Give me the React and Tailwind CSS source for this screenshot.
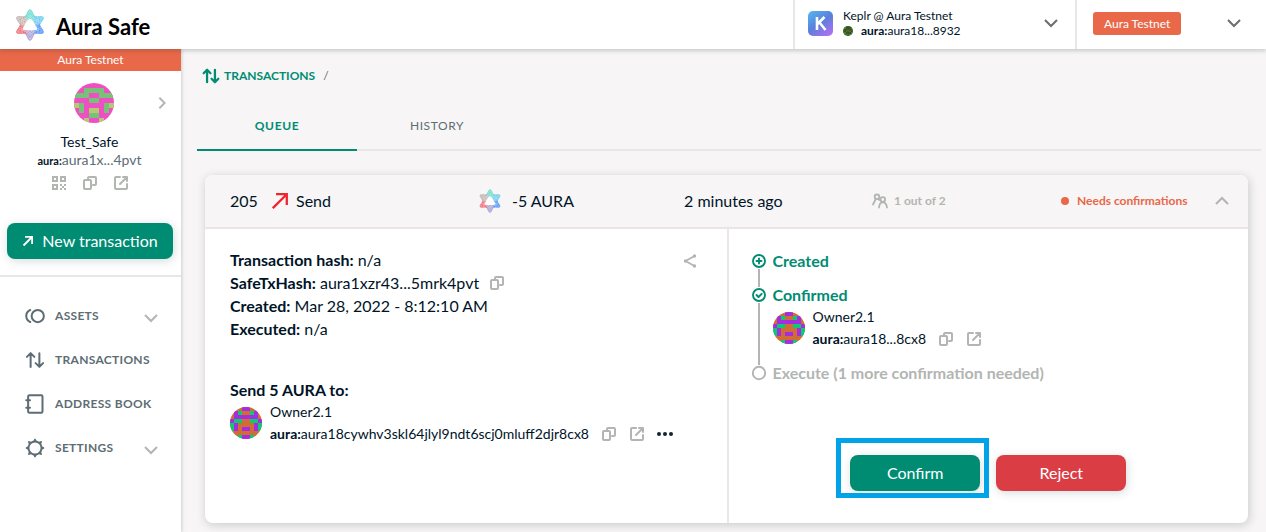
import React from "react";

function AuraLogo({ className }) {
  const tips = [
    ["#22c9b8", "#86e3d6"],
    ["#2db4e6", "#86d5f1"],
    ["#1f72f0", "#6ba6f9"],
    ["#7f6fba", "#bcb2de"],
    ["#ea2f3e", "#ef8a92"],
    ["#a18f8c", "#cfc2be"],
  ];
  return (
    <svg viewBox="0 0 32 32" className={className} aria-hidden="true">
      {tips.map(([dark, light], i) => (
        <g key={dark} transform={`rotate(${i * 60} 16 16)`}>
          <path d="M16 16L10.800 7.800C13 6.500 13.800.600 16 .600s3 5.900 5.200 7.200z" fill={light} fillOpacity=".85" />
          <path d="M10.800 7.800C13 6.500 13.800.600 16 .600s3 5.900 5.200 7.200" fill="none" stroke={dark} strokeWidth=".6" strokeOpacity=".7" />
          <path d="M11.500 8.500l6.500-5M13 9.500l6-5M15 10l5-4M20.500 8.500l-6.500-5M19 9.500l-6-5M17 10l-5-4" fill="none" stroke={dark} strokeWidth=".5" strokeOpacity=".6" />
          <path d="M12.200 9.200l6-4.800M14 9.800l5.500-4.500M19.800 9.200l-6-4.800M18 9.800l-5.500-4.500" fill="none" stroke="white" strokeWidth=".35" strokeOpacity=".7" />
        </g>
      ))}
      <path d="M9 18.800c2-2.500 3.500-8 7-9.300 3.500 1.300 5 6.800 7 9.300.8 1.400 0 2.400-2 2.400H11c-2 0-2.800-1-2-2.400z" fill="white" />
    </svg>
  );
}

const SAFE_PIXELS = ["aaaaaaaa", "aabbbbaa", "bbbaabbb", "aaabbaaa", "cbaaaabc", "abaccaba", "aaabbaaa", "aacaacaa"];
const OWNER_PIXELS = ["aaabbaaa", "abcaacba", "abbbbbba", "bccaaccb", "cbaaaabc", "cbabbabc", "aaaaaaaa", "aacbbcaa"];
const KEPLR_PIXELS = ["aabaabaa", "abaaaaba", "aacaacaa", "bacbbcab", "aabccbaa", "abaaaaba", "aabbbbaa", "aaaccaaa"];

function Identicon({ pixels, colors, className }) {
  return (
    <svg viewBox="0 0 8 8" className={`shrink-0 rounded-full ${className}`} shapeRendering="crispEdges" aria-hidden="true">
      <rect width="8" height="8" fill={colors.a} />
      {pixels.flatMap((row, y) =>
        [...row].map((c, x) =>
          c === "a" ? null : <rect key={`${x}-${y}`} x={x} y={y} width="1" height="1" fill={colors[c]} />
        )
      )}
    </svg>
  );
}

const SAFE_COLORS = { a: "#f04fc4", b: "#78c178", c: "#b5ca72" };
const OWNER_COLORS = { a: "#d06c35", b: "#a72ce0", c: "#08cb74" };
const KEPLR_COLORS = { a: "#2f5a24", b: "#4d7a2c", c: "#6b4a2a" };

function Icon({ children, className = "size-4", width = 2 }) {
  return (
    <svg viewBox="0 0 16 16" className={`shrink-0 ${className}`} fill="none" stroke="currentColor" strokeWidth={width} strokeLinecap="round" strokeLinejoin="round" aria-hidden="true">
      {children}
    </svg>
  );
}

const CopyIcon = () => (
  <Icon>
    <path d="M6 5V3a1 1 0 0 1 1-1h6a1 1 0 0 1 1 1v6a1 1 0 0 1-1 1h-2" />
    <rect x="2" y="5" width="7" height="9" rx="1" />
  </Icon>
);

const OpenIcon = () => (
  <Icon>
    <path d="M7 2H3a1 1 0 0 0-1 1v10a1 1 0 0 0 1 1h10a1 1 0 0 0 1-1V9M10 2h4v4M13.500 2.500L7 9" />
  </Icon>
);

const QrIcon = () => (
  <Icon>
    <path strokeLinecap="butt" strokeLinejoin="miter" d="M2 2h4v4H2zM10 2h4v4h-4zM2 10h4v4H2z" />
    <path strokeLinecap="butt" d="M9 10h2M13 10h2M11 12h2M9 14h2M13 14h2" />
  </Icon>
);

const Chevron = ({ className = "", up = false }) => (
  <Icon className={`size-4 ${className}`}>
    <path strokeLinecap="butt" strokeLinejoin="miter" d={up ? "M2 11l6-6 6 6" : "M2 5l6 6 6-6"} />
  </Icon>
);

const ArrowsIcon = ({ className, width = 1.6 }) => (
  <Icon className={className} width={width}>
    <path d="M4.500 13.500V3M1.500 5.500l3-3 3 3M11.500 2.500V13M8.500 10.500l3 3 3-3" />
  </Icon>
);

function IconButton({ label, children }) {
  return (
    <button type="button" aria-label={label} className="flex text-[#b2b5b2]">
      {children}
    </button>
  );
}

function Header() {
  return (
    <header className="relative z-10 flex h-[49px] items-stretch bg-white shadow-[0_2px_4px_rgba(40,54,61,0.22)]">
      <a href="#home" className="flex flex-1 items-center gap-[10px] pl-[14px]">
        <AuraLogo className="size-8" />
        <span className="pt-1 text-[22px] font-bold text-black">Aura Safe</span>
      </a>
      <button type="button" className="flex w-[282px] items-center border-l-2 border-[#e8e7e6] pr-4 pb-[3px] pl-[13px] text-left">
        <svg viewBox="0 0 25 25" className="size-[25px]" aria-hidden="true">
          <defs>
            <linearGradient id="keplr" x1="0.1" y1="0" x2="0.8" y2="1">
              <stop offset="0" stopColor="#55b4ee" />
              <stop offset="0.5" stopColor="#5a80dc" />
              <stop offset="1" stopColor="#ad70f2" />
            </linearGradient>
          </defs>
          <rect width="25" height="25" rx="5" fill="url(#keplr)" />
          <path d="M9 6v13M16.500 6l-7 7M11.500 11.500l6 7.500" fill="none" stroke="white" strokeWidth="2.600" />
        </svg>
        <span className="ml-[10px] flex flex-1 flex-col text-xs leading-[15px]">
          <span>Keplr @ Aura Testnet</span>
          <span className="flex items-center gap-2">
            <Identicon pixels={KEPLR_PIXELS} colors={KEPLR_COLORS} className="size-[10px]" />
            <span><b>aura:</b>aura18...8932</span>
          </span>
        </span>
        <Chevron className="text-[#6b6d70]" />
      </button>
      <button type="button" className="flex w-[191px] items-center justify-between border-l-2 border-[#e8e7e6] pr-6 pb-[3px] pl-4">
        <span className="rounded-[3px] bg-[#e86849] px-[11px] py-1 text-xs leading-[15px] text-white">Aura Testnet</span>
        <Chevron className="text-[#6b6d70]" />
      </button>
    </header>
  );
}

const NAV = [
  {
    label: "Assets",
    expandable: true,
    icon: (
      <Icon className="size-5" width={1.6}>
        <circle cx="10.200" cy="8" r="4.900" />
        <path d="M4.200 3.200a5.200 5.200 0 0 0 0 9.600" />
      </Icon>
    ),
  },
  { label: "Transactions", icon: <ArrowsIcon className="size-5" /> },
  {
    label: "Address book",
    icon: (
      <Icon className="size-5" width={1.6}>
        <rect x="2.500" y="1" width="11.500" height="14" rx="1" />
        <path d="M1 5h3M1 11h3" />
      </Icon>
    ),
  },
  {
    label: "Settings",
    expandable: true,
    icon: (
      <Icon className="size-5" width={1.5}>
        <circle cx="8" cy="8" r="5.200" />
        <path strokeLinejoin="miter" fill="currentColor" strokeWidth=".8" d="M7 2.500l1-1.800 1 1.800zM7 13.500l1 1.800 1-1.800zM2.500 7L.7 8l1.800 1zM13.500 7l1.800 1-1.800 1zM3.400 4.800l-.6-2 2 .6zM12.600 4.800l.6-2-2 .6zM3.400 11.200l-.6 2 2-.6zM12.600 11.200l.6 2-2-.6z" />
      </Icon>
    ),
  },
];

function Sidebar() {
  return (
    <aside className="w-[181px] shrink-0 bg-white shadow-[1px_0_3px_rgba(40,54,61,0.2)]">
      <div className="bg-[#e86849] text-center text-xs leading-[22px] text-white">Aura Testnet</div>
      <div className="grid grid-cols-[1fr_auto_1fr] items-center pt-3 pl-[7px]">
        <Identicon pixels={SAFE_PIXELS} colors={SAFE_COLORS} className="col-start-2 size-10" />
        <button type="button" aria-label="Switch safe" className="mr-3 justify-self-end text-[#b2b5b2]">
          <Icon className="size-[14px]" width={2.2}>
            <path strokeLinecap="butt" strokeLinejoin="miter" d="M5 2l6 6-6 6" />
          </Icon>
        </button>
      </div>
      <div className="flex flex-col items-center pt-[10px] pr-[2px] text-sm leading-[18px]">
        <span>Test_Safe</span>
        <span className="text-[#5d6d74]"><b className="text-[11px] text-[#001428]">aura:</b>aura1x...4pvt</span>
        <div className="mt-[5px] flex gap-[15px]">
          <IconButton label="Show QR code"><QrIcon /></IconButton>
          <IconButton label="Copy address"><CopyIcon /></IconButton>
          <IconButton label="Open in explorer"><OpenIcon /></IconButton>
        </div>
      </div>
      <div className="border-b-2 border-[#e8e7e6] px-[7px] pt-8 pb-4">
        <button type="button" className="flex h-9 w-[166px] items-center justify-center gap-2 rounded-lg bg-[#008c73] text-base text-white shadow-[1px_2px_10px_rgba(40,54,61,0.18)]">
          <Icon className="size-3" width={2.4}>
            <path strokeLinecap="butt" strokeLinejoin="miter" d="M2 14L13 3M4 2.500h9.500V12" />
          </Icon>
          New transaction
        </button>
      </div>
      <nav className="pt-[17px]">
        {NAV.map(({ label, icon, expandable }) => (
          <a key={label} href={`#${label}`} className="flex h-11 items-center gap-[10px] pr-[22px] pl-[25px] text-xs font-bold tracking-wide text-[#5d6d74] uppercase">
            {icon}
            <span className="flex-1 whitespace-nowrap">{label}</span>
            {expandable && <Chevron className="mt-1 text-[#b2b5b2]" />}
          </a>
        ))}
      </nav>
    </aside>
  );
}

function Owner({ address, more = false }) {
  return (
    <div className="flex items-center gap-2">
      <Identicon pixels={OWNER_PIXELS} colors={OWNER_COLORS} className="size-8" />
      <div className="text-sm leading-[22px]">
        <div>Owner2.1</div>
        <div className="flex items-center">
          <span><b>aura:</b>{address}</span>
          <span className="ml-3 flex items-center gap-3">
            <IconButton label="Copy owner address"><CopyIcon /></IconButton>
            <IconButton label="Open owner in explorer"><OpenIcon /></IconButton>
            {more && (
              <button type="button" aria-label="More options" className="flex">
                <svg viewBox="0 0 16 16" className="size-4" fill="#162332" aria-hidden="true">
                  <circle cx="2" cy="8" r="2" /><circle cx="8" cy="8" r="2" /><circle cx="14" cy="8" r="2" />
                </svg>
              </button>
            )}
          </span>
        </div>
      </div>
    </div>
  );
}

function Rail({ className }) {
  return <span className={`w-[2px] bg-[#b2b5b2] ${className}`} />;
}

function Timeline() {
  return (
    <ol className="text-base leading-[22px] font-bold">
      <li className="flex gap-[6px] text-[#008c73]">
        <span className="flex w-4 flex-col items-center pt-[3px]">
          <Icon width={1.9}><circle cx="8" cy="8" r="6" /><path d="M8 5.500v5M5.500 8h5" /></Icon>
          <Rail className="h-[18px]" />
        </span>
        Created
      </li>
      <li className="flex gap-[6px] text-[#008c73]">
        <span className="flex w-4 flex-col items-center">
          <Icon width={1.9}><circle cx="8" cy="8" r="6" /><path d="M5.500 8l2 2 3.200-3.200" /></Icon>
          <Rail className="flex-1" />
        </span>
        <div className="-mt-[3px]">
          Confirmed
          <div className="pb-[15px] font-normal text-[#001428]"><Owner address="aura18...8cx8" /></div>
        </div>
      </li>
      <li className="flex gap-[6px] text-[#b2b5b2]">
        <span className="flex w-4 flex-col items-center">
          <Icon width={1.9}><circle cx="8" cy="8" r="6.200" /></Icon>
        </span>
        <span className="-mt-[3px]">Execute (1 more confirmation needed)</span>
      </li>
    </ol>
  );
}

function TransactionCard() {
  return (
    <article className="mr-[13px] ml-2 flex flex-1 flex-col overflow-hidden rounded-lg bg-white shadow-[1px_2px_10px_rgba(40,54,61,0.22)]">
      <div className="grid h-[54px] grid-cols-[42px_206fr_206fr_188fr_189fr_147fr_28px] items-center border-b-2 border-[#e8e7e6] bg-[#f7f5f5] pr-3 pl-[25px] text-base">
        <span>205</span>
        <span className="flex items-center gap-2">
          <svg viewBox="0 0 16 16" className="size-4" fill="none" stroke="#f02532" strokeWidth="2.300" aria-hidden="true"><path d="M0.800 15.200L14 2M4 1.200h10.800V12" /></svg>
          Send
        </span>
        <span className="flex items-center gap-[10px]"><AuraLogo className="size-6" />-5 AURA</span>
        <span>2 minutes ago</span>
        <span className="flex items-center gap-[6px] text-xs font-bold text-[#b2b5b2]">
          <Icon width={1.800}>
            <circle cx="5" cy="3.800" r="2.300" />
            <path d="M1 11.500l2.500-5M6.500 6l1 1" />
            <circle cx="10.800" cy="6.500" r="2.300" />
            <path d="M7 14.500c.2-3 1.300-5.200 3.800-5.200s3.800 2.200 4.200 5.200" />
          </Icon>
          1 out of 2
        </span>
        <span className="flex items-center gap-2 text-xs font-bold whitespace-nowrap text-[#e86849]">
          <span className="size-2 rounded-full bg-[#e86849]" />
          Needs confirmations
        </span>
        <button type="button" aria-label="Collapse transaction" className="flex justify-center text-[#b2b5b2]"><Chevron up /></button>
      </div>
      <div className="grid flex-1 grid-cols-2">
        <div className="pt-[19px] pb-8 pl-[25px]">
          <div className="flex items-start justify-between pr-[29px]">
            <div className="text-base leading-[23px]">
              <p><b>Transaction hash:</b> n/a</p>
              <p className="flex items-center gap-[10px]">
                <span><b>SafeTxHash:</b> aura1xzr43...5mrk4pvt</span>
                <IconButton label="Copy hash"><CopyIcon /></IconButton>
              </p>
              <p><b>Created:</b> Mar 28, 2022 - 8:12:10 AM</p>
              <p><b>Executed:</b> n/a</p>
            </div>
            <button type="button" aria-label="Share" className="mt-[5px] flex text-[#b2b5b2]">
              <Icon width={1.800}>
                <path d="M12.500 3L3.500 8l9 5" />
                <g fill="currentColor"><circle cx="12.500" cy="3" r=".8" /><circle cx="3.500" cy="8" r=".8" /><circle cx="12.500" cy="13" r=".8" /></g>
              </Icon>
            </button>
          </div>
          <p className="mt-[38px] text-base leading-[23px] font-bold">Send 5 AURA to:</p>
          <Owner address="aura18cywhv3skl64jlyl9ndt6scj0mluff2djr8cx8" more />
        </div>
        <div className="flex flex-col justify-between gap-4 border-l-2 border-[#e8e7e6] pt-[21px] pb-8">
          <div className="pl-[22px]"><Timeline /></div>
          <div className="flex justify-center gap-4 text-base text-white">
            <div className="relative">
              <button type="button" className="h-9 w-[130px] rounded-lg bg-[#008c73] shadow-[1px_2px_10px_rgba(40,54,61,0.18)]">Confirm</button>
              <span className="pointer-events-none absolute -top-[17px] -right-[9px] -bottom-[7px] -left-[14px] border-5 border-[#00a2e8]" />
            </div>
            <button type="button" className="h-9 w-[130px] rounded-lg bg-[#db3d45] shadow-[1px_2px_10px_rgba(40,54,61,0.18)]">Reject</button>
          </div>
        </div>
      </div>
    </article>
  );
}

export default function App() {
  return (
    <div className="flex min-h-screen flex-col bg-[#f7f5f5] font-['Lato','Open_Sans',sans-serif] text-[#001428]">
      <Header />
      <div className="flex flex-1">
        <Sidebar />
        <main className="flex min-w-0 flex-1 flex-col pt-[17px] pr-[5px] pb-[9px] pl-4">
          <div className="flex items-center gap-1 pl-[5px] text-xs leading-5 text-[#5d6d74]">
            <ArrowsIcon className="size-[18px] text-[#008c73]" width={2} />
            <span className="font-bold text-[#008c73] uppercase">Transactions</span>
            <span className="ml-1">/</span>
          </div>
          <div role="tablist" className="mb-6 flex h-[65px] border-b-2 border-[#e8e7e6] text-xs tracking-wider uppercase">
            <button type="button" role="tab" aria-selected="true" className="-mb-[2px] w-40 border-b-2 border-[#008c73] pt-4 font-bold text-[#008c73] uppercase">Queue</button>
            <button type="button" role="tab" aria-selected="false" className="w-40 pt-4 text-[#5d6d74] uppercase">History</button>
          </div>
          <TransactionCard />
        </main>
      </div>
    </div>
  );
}
